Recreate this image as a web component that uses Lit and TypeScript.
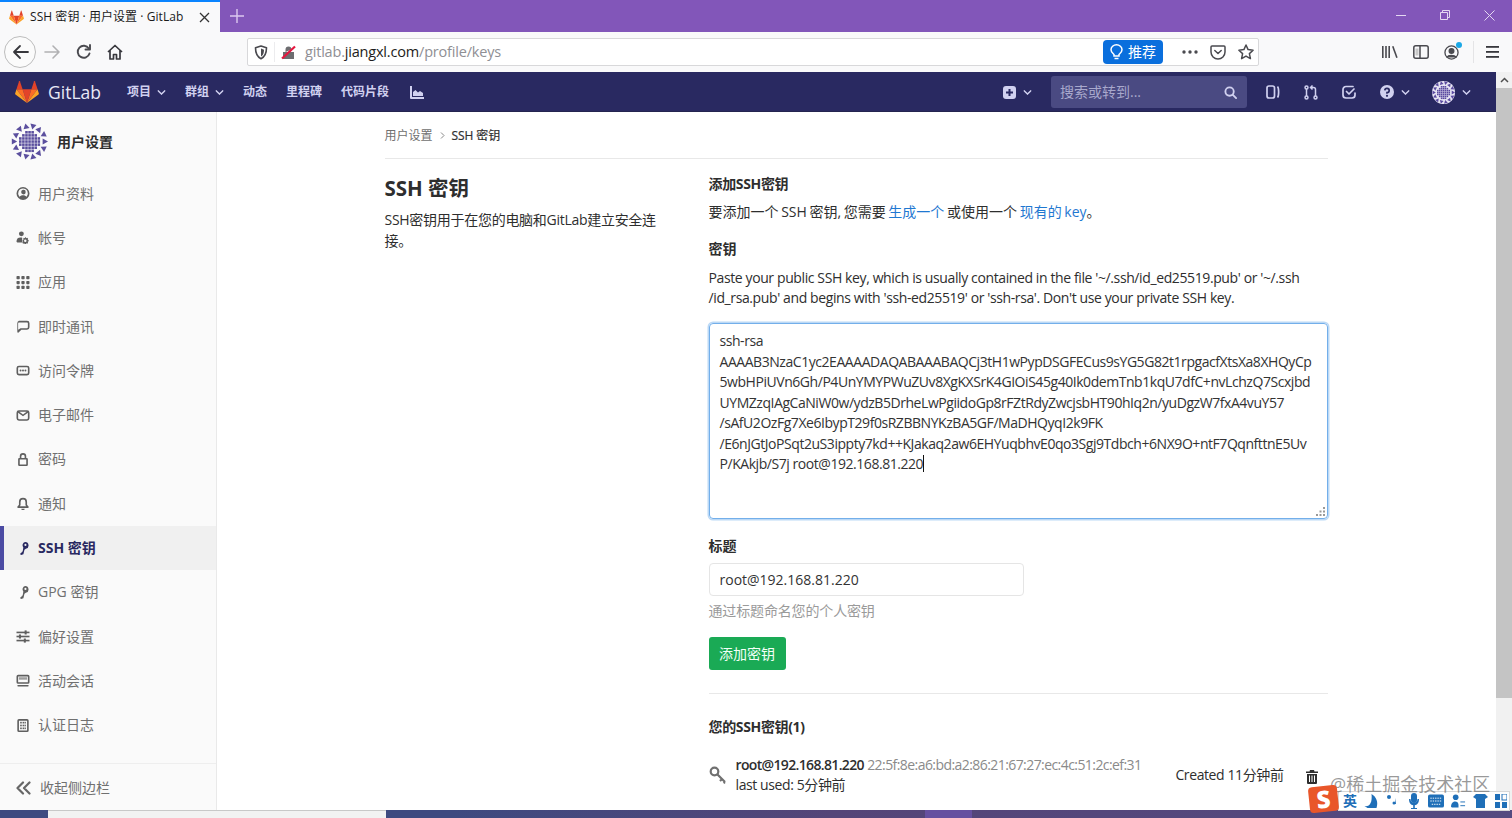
import { LitElement, css, html, svg } from 'lit';
import { customElement } from 'lit/decorators.js';

const tanuki = (size: number) => html`<svg width=${size} height=${size} viewBox="0 0 36 34">
  <path fill="#e24329" d="M18 33.5 24.6 13H11.4Z" />
  <path fill="#fc6d26" d="M18 33.5 11.4 13H2.2Z" />
  <path fill="#fca326" d="M2.2 13 .2 19.1c-.2.6 0 1.200.5 1.600L18 33.500Z" />
  <path fill="#e24329" d="M2.200 13h9.200L7.400.800c-.2-.6-1.100-.6-1.300 0Z" />
  <path fill="#fc6d26" d="M18 33.500 24.600 13h9.200Z" />
  <path fill="#fca326" d="M33.800 13l2 6.100c.2.600 0 1.200-.5 1.600L18 33.500Z" />
  <path fill="#e24329" d="M33.800 13h-9.200l4-12.200c.2-.6 1.100-.6 1.300 0Z" />
</svg>`;

const icon = (body: unknown, size = 14, cls = '') =>
  html`<svg class=${cls} width=${size} height=${size} viewBox="0 0 16 16" fill="currentColor">${body}</svg>`;

const chevron = html`<svg class="chev" width="9" height="9" viewBox="0 0 10 10" fill="none" stroke="currentColor" stroke-width="1.600" stroke-linecap="round" stroke-linejoin="round"><path d="M1.500 3.200 5 6.800l3.500-3.600" /></svg>`;

const sideIcons: Record<string, unknown> = {
  profile: svg`<path fill-rule="evenodd" d="M8 0a8 8 0 1 1 0 16A8 8 0 0 1 8 0Zm0 2a6 6 0 0 0-4.500 10c1-1.300 2.700-2 4.500-2s3.500.7 4.500 2A6 6 0 0 0 8 2Zm0 1.500A2.800 2.800 0 1 1 8 9a2.800 2.800 0 0 1 0-5.500Z"/>`,
  account: svg`<circle cx="6" cy="3.500" r="3"/><path d="M0 13c0-3 1.500-5 5-5 .8 0 1.500.1 2 .3V14H1a1 1 0 0 1-1-1Z"/><path fill-rule="evenodd" d="M11.500 7.500l.5 1.300 1.300-.4 1 1-.5 1.200 1.200.7v1.400l-1.200.6.5 1.300-1 1-1.300-.5-.5 1.200h-1.500l-.5-1.200-1.300.5-1-1 .5-1.300L7.500 12.700v-1.400l1.200-.7-.5-1.200 1-1 1.300.4.500-1.300ZM10.800 10.500a1.500 1.500 0 1 0 0 3 1.500 1.500 0 0 0 0-3Z"/>`,
  apps: svg`<rect x="0" y="0" width="4" height="4" rx="1"/><rect x="6" y="0" width="4" height="4" rx="1"/><rect x="12" y="0" width="4" height="4" rx="1"/><rect x="0" y="6" width="4" height="4" rx="1"/><rect x="6" y="6" width="4" height="4" rx="1"/><rect x="12" y="6" width="4" height="4" rx="1"/><rect x="0" y="12" width="4" height="4" rx="1"/><rect x="6" y="12" width="4" height="4" rx="1"/><rect x="12" y="12" width="4" height="4" rx="1"/>`,
  chat: svg`<path fill-rule="evenodd" d="M3 1h10a3 3 0 0 1 3 3v5a3 3 0 0 1-3 3H6l-3.500 3.500c-.6.500-1.500.1-1.500-.7V4a3 3 0 0 1 2-3Zm0 2a1 1 0 0 0-1 1v8l3-2h8a1 1 0 0 0 1-1V4a1 1 0 0 0-1-1Z"/>`,
  token: svg`<path fill-rule="evenodd" d="M3 2h10a3 3 0 0 1 3 3v6a3 3 0 0 1-3 3H3a3 3 0 0 1-3-3V5a3 3 0 0 1 3-3Zm0 2a1 1 0 0 0-1 1v6a1 1 0 0 0 1 1h10a1 1 0 0 0 1-1V5a1 1 0 0 0-1-1Z"/><circle cx="5" cy="8" r="1.200"/><circle cx="8" cy="8" r="1.200"/><circle cx="11" cy="8" r="1.200"/>`,
  mail: svg`<path fill-rule="evenodd" d="M3 1.500h10a3 3 0 0 1 3 3v7a3 3 0 0 1-3 3H3a3 3 0 0 1-3-3v-7a3 3 0 0 1 3-3Zm-1 3.200v6.800a1 1 0 0 0 1 1h10a1 1 0 0 0 1-1V4.700L8 9ZM3.500 3.500 8 6.800l4.500-3.300Z"/>`,
  lock: svg`<path fill-rule="evenodd" d="M8 0a4 4 0 0 1 4 4v2h.5A1.500 1.500 0 0 1 14 7.500v7a1.500 1.500 0 0 1-1.500 1.500h-9A1.500 1.500 0 0 1 2 14.500v-7A1.500 1.500 0 0 1 3.500 6H4V4a4 4 0 0 1 4-4Zm0 2a2 2 0 0 0-2 2v2h4V4a2 2 0 0 0-2-2ZM4 8v6h8V8Z"/>`,
  bell: svg`<path fill-rule="evenodd" d="M8 1a5 5 0 0 1 5 5v3.500l2 2.500c.3.500 0 1.500-1 1.500H2c-1 0-1.300-1-1-1.500l2-2.500V6a5 5 0 0 1 5-5Zm0 2a3 3 0 0 0-3 3v4l-1 1.500h8L11 10V6a3 3 0 0 0-3-3Z"/><path d="M6 14.500h4a2 2 0 0 1-4 0Z"/>`,
  key: svg`<path fill-rule="evenodd" d="M10.500 0a4.200 4.200 0 0 1 1 8.300L9.800 9.500 8.500 15l-2.800 1-1.200-.8.400-1.500 1.300-.4.200-1 1.200-.6.300-1.800.5-3.200A4.200 4.200 0 0 1 10.500 0Zm.5 2.300a1.300 1.300 0 1 0 0 2.600 1.300 1.300 0 0 0 0-2.600Z"/>`,
  prefs: svg`<rect x="0" y="2" width="16" height="2"/><rect x="0" y="7" width="16" height="2"/><rect x="0" y="12" width="16" height="2"/><rect x="10" y="0.500" width="2.500" height="5" fill="currentColor"/><rect x="3" y="5.500" width="2.500" height="5"/><rect x="9" y="10.500" width="2.500" height="5"/>`,
  session: svg`<path fill-rule="evenodd" d="M2 1h12a2 2 0 0 1 2 2v7a2 2 0 0 1-2 2H2a2 2 0 0 1-2-2V3a2 2 0 0 1 2-2Zm0 2v7h12V3Z"/><rect x="3" y="4" width="10" height="3" opacity=".6"/><rect x="1" y="13.500" width="14" height="2" rx="1"/>`,
  log: svg`<path fill-rule="evenodd" d="M3 0h10a2 2 0 0 1 2 2v12a2 2 0 0 1-2 2H3a2 2 0 0 1-2-2V2a2 2 0 0 1 2-2Zm0 2v12h10V2Z"/><rect x="4.500" y="3.500" width="2" height="2"/><rect x="7.500" y="3.500" width="2" height="2"/><rect x="10" y="3.500" width="1.500" height="2"/><rect x="4.500" y="7" width="2" height="2"/><rect x="7.500" y="7" width="2" height="2"/><rect x="10" y="7" width="1.500" height="2"/><rect x="4.500" y="10.500" width="2" height="2"/><rect x="7.500" y="10.500" width="2" height="2"/><rect x="10" y="10.500" width="1.500" height="2"/>`,
};

const sideItems = [
  ['profile', '用户资料'],
  ['account', '帐号'],
  ['apps', '应用'],
  ['chat', '即时通讯'],
  ['token', '访问令牌'],
  ['mail', '电子邮件'],
  ['lock', '密码'],
  ['bell', '通知'],
  ['key', 'SSH 密钥'],
  ['key', 'GPG 密钥'],
  ['prefs', '偏好设置'],
  ['session', '活动会话'],
  ['log', '认证日志'],
];

const keyLines = [
  'ssh-rsa',
  'AAAAB3NzaC1yc2EAAAADAQABAAABAQCj3tH1wPypDSGFECus9sYG5G82t1rpgacfXtsXa8XHQyCp',
  '5wbHPiUVn6Gh/P4UnYMYPWuZUv8XgKXSrK4GIOiS45g40Ik0demTnb1kqU7dfC+nvLchzQ7Scxjbd',
  'UYMZzqIAgCaNiW0w/ydzB5DrheLwPgiidoGp8rFZtRdyZwcjsbHT90hIq2n/yuDgzW7fxA4vuY57',
  '/sAfU2OzFg7Xe6IbypT29f0sRZBBNYKzBA5GF/MaDHQyqI2k9FK',
  '/E6nJGtJoPSqt2uS3ippty7kd++KJakaq2aw6EHYuqbhvE0qo3Sgj9Tdbch+6NX9O+ntF7QqnfttnE5Uv',
];

// identicon: dotted centre with a ring of small triangles
const avatar = (size: number, fg: string, bg: string) => {
  const dots = [];
  for (let y = -3; y <= 3; y++) {
    for (let x = -3; x <= 3; x++) {
      if (x * x + y * y <= 11) dots.push(svg`<rect x=${16.800 + x * 3} y=${16.800 + y * 3} width="2.500" height="2.500" />`);
    }
  }
  const tris = [];
  for (let i = 0; i < 14; i++) {
    const a = (i / 14) * Math.PI * 2;
    tris.push(svg`<path transform="translate(${18 + Math.cos(a) * 15} ${18 + Math.sin(a) * 15}) rotate(${(a * 180) / Math.PI + 90 + (i % 2) * 180})" d="M0-3 3 2.200H-3Z" />`);
  }
  return html`<svg width=${size} height=${size} viewBox="0 0 36 36"><circle cx="18" cy="18" r="18" fill=${bg} /><g fill=${fg}>${dots}${tris}</g></svg>`;
};

@customElement('app-root')
export class AppRoot extends LitElement {
  static styles = css`
    :host {
      display: flex;
      flex-direction: column;
      position: relative;
      width: 1512px;
      height: 818px;
      overflow: hidden;
      background: #fff;
      font: 14px/20px 'Open Sans', 'Noto Sans CJK SC', sans-serif;
      color: #2e2e2e;
    }
    .tabbar {
      display: flex;
      align-items: stretch;
      height: 32px;
      flex: none;
      background: #8256b9;
      color: #fff;
    }
    .tab {
      display: flex;
      align-items: center;
      width: 220px;
      box-sizing: border-box;
      padding: 0 10px 0 9px;
      background: #f9f9fa;
      border-top: 2px solid #0a84ff;
      color: #1a1a1a;
      font-size: 12px;
      gap: 6px;
    }
    .tab-title {
      flex: 1;
      white-space: nowrap;
      letter-spacing: 0.05px;
    }
    .tab-close,
    .newtab {
      display: flex;
    }
    .newtab {
      margin: 9px 0 0 10px;
      height: 16px;
      color: #dcc8f0;
    }
    .winbtns {
      display: flex;
      margin-left: auto;
      color: #e4d8f2;
      gap: 34px;
      padding: 10px 17px 0 0;
    }
    .toolbar {
      display: flex;
      align-items: center;
      height: 40px;
      flex: none;
      background: #f9f9fa;
      color: #4a4a4f;
    }
    .back {
      display: flex;
      align-items: center;
      justify-content: center;
      width: 32px;
      height: 32px;
      margin-left: 4px;
      border: 1px solid #bdbdbd;
      border-radius: 50%;
      box-sizing: border-box;
      background: #fbfbfb;
    }
    .tool {
      display: flex;
      flex: none;
    }
    .fwd {
      margin-left: 8px;
      color: #b1b1b3;
    }
    .reload {
      margin-left: 15px;
    }
    .home {
      margin-left: 15px;
    }
    .urlbar {
      display: flex;
      align-items: center;
      width: 1012px;
      height: 28px;
      margin-left: 124px;
      box-sizing: border-box;
      background: #fff;
      border: 1px solid #d8d8da;
      border-radius: 2px;
      padding-left: 6px;
    }
    .sep {
      width: 1px;
      height: 20px;
      margin: 0 6px;
      background: #ececee;
    }
    .url {
      margin-left: 9px;
      color: #8f8f94;
      font-size: 14.500px;
      letter-spacing: -0.19px;
    }
    .url b {
      font-weight: 400;
      color: #1d1d20;
    }
    .rec {
      display: flex;
      align-items: center;
      justify-content: center;
      gap: 5px;
      width: 60px;
      height: 24px;
      margin-left: auto;
      border-radius: 4px;
      background: #0a6fdd;
      color: #fff;
      font-size: 14px;
    }
    .urlicons {
      display: flex;
      align-items: center;
      gap: 12px;
      margin: 0 4px 0 19px;
    }
    .rightbtns {
      display: flex;
      align-items: center;
      gap: 15px;
      margin-left: 123px;
    }
    .badgewrap {
      position: relative;
      display: flex;
    }
    .badge {
      position: absolute;
      top: -3px;
      right: -3px;
      width: 6px;
      height: 6px;
      border-radius: 50%;
      background: #1ba8e6;
    }
    .tsep {
      width: 1px;
      height: 22px;
      background: #e4e4e6;
      margin: 0 -3px 0 -1px;
    }
    .main {
      display: flex;
      flex: 1;
      min-height: 0;
    }
    .appcol {
      display: flex;
      flex-direction: column;
      flex: 1;
      min-width: 0;
    }
    .scrollbar {
      display: flex;
      flex-direction: column;
      width: 16px;
      flex: none;
      background: #f1f1f1;
    }
    .sb-up {
      display: flex;
      justify-content: center;
      align-items: center;
      height: 16px;
      color: #505050;
    }
    .sb-thumb {
      height: 610px;
      background: #c4c4c4;
    }
    .nav {
      display: flex;
      align-items: center;
      height: 38px;
      flex: none;
      background: #292961;
      color: #d1d1f0;
      font-size: 12px;
      font-weight: 700;
      border-bottom: 1px solid #24244f;
      padding: 1px 0 0 15px;
    }
    .brand {
      display: flex;
      align-items: center;
      gap: 9px;
      width: 112px;
      color: #e8e8f6;
      font-size: 17.500px;
      font-weight: 400;
      flex: none;
    }
    .links {
      display: flex;
      align-items: center;
      gap: 19px;
    }
    .link {
      display: flex;
      align-items: center;
      gap: 6px;
      white-space: nowrap;
    }
    .link.chart {
      margin-left: 2px;
    }
    .chev {
      flex: none;
    }
    .navright {
      display: flex;
      align-items: center;
      margin-left: auto;
      padding-right: 25px;
      color: #d1d1f0;
    }
    .navgroup {
      display: flex;
      align-items: center;
      gap: 7px;
    }
    .search {
      display: flex;
      align-items: center;
      justify-content: space-between;
      width: 196px;
      height: 32px;
      box-sizing: border-box;
      margin: 0 19px 0 19px;
      padding: 0 10px 0 9px;
      border-radius: 3px;
      background: #4a4a82;
      color: #a8a8cc;
      font-size: 14px;
      font-weight: 400;
    }
    .navicons {
      display: flex;
      align-items: center;
      gap: 24px;
      margin-right: 22px;
    }
    .body {
      display: flex;
      flex: 1;
      min-height: 0;
    }
    .side {
      display: flex;
      flex-direction: column;
      width: 217px;
      flex: none;
      box-sizing: border-box;
      background: #fafafa;
      border-right: 1px solid #e9e9e9;
    }
    .side-head {
      display: flex;
      align-items: center;
      gap: 9px;
      height: 59.500px;
      padding: 0 0 0 11px;
      font-weight: 700;
      flex: none;
      box-sizing: border-box;
    }
    .item {
      display: flex;
      align-items: center;
      gap: 8px;
      height: 44.300px;
      padding-left: 16px;
      color: #707070;
      flex: none;
      box-sizing: border-box;
    }
    .item.active {
      background: #f0f0f0;
      color: #292961;
      font-weight: 700;
      border-left: 4px solid #4b4ba3;
      padding-left: 12px;
    }
    .item svg {
      color: #5f5f5f;
      flex: none;
      width: 14px;
    }
    .item.active svg {
      color: #292961;
    }
    .collapse {
      display: flex;
      align-items: center;
      gap: 9px;
      height: 47px;
      margin-top: auto;
      padding: 2px 0 0 16px;
      border-top: 1px solid #eee;
      color: #707070;
      box-sizing: border-box;
      flex: none;
    }
    .page {
      flex: 1;
      min-width: 0;
      overflow: hidden;
      padding-right: 1px;
    }
    .wrap {
      width: 943px;
      margin: 0 auto;
    }
    .crumbs {
      display: flex;
      align-items: center;
      gap: 7px;
      height: 47px;
      box-sizing: border-box;
      border-bottom: 1px solid #e8e8e8;
      font-size: 12px;
      color: #707070;
      padding-top: 1px;
    }
    .crumbs b {
      font-weight: 400;
      color: #303030;
      letter-spacing: -0.1px;
      -webkit-text-stroke: 0.2px #303030;
    }
    .cols {
      display: grid;
      grid-template-columns: 324px 619px;
    }
    .intro {
      padding: 15px 40px 0 0;
    }
    .intro h4 {
      margin: 0;
      font-size: 20.500px;
      line-height: 28px;
      font-weight: 700;
      color: #2e2e2e;
    }
    .intro p {
      margin: 7px 0 0;
      line-height: 21px;
      color: #2e2e2e;
      letter-spacing: -0.28px;
    }
    .form {
      padding-top: 15px;
    }
    h5 {
      margin: 0;
      font-size: 14px;
      line-height: 20px;
      font-weight: 700;
      color: #2e2e2e;
    }
    .tight {
      letter-spacing: -0.35px;
    }
    .form p {
      margin: 8px 0 0;
      word-spacing: -1px;
    }
    a {
      color: #1f78d1;
      text-decoration: none;
    }
    .mt17 {
      margin-top: 17px;
    }
    .form p.hintp {
      margin-top: 9px;
      letter-spacing: -0.39px;
      word-spacing: 0;
    }
    .key {
      position: relative;
      height: 196px;
      margin-top: 15px;
      box-sizing: border-box;
      padding: 7px 10px;
      border: 1px solid #73afea;
      border-radius: 4px;
      box-shadow: 0 0 0 1.500px #bcd9f6;
      line-height: 20.500px;
      color: #333;
      white-space: pre;
      letter-spacing: -0.45px;
      overflow: hidden;
    }
    .caret {
      display: inline-block;
      width: 1px;
      height: 17px;
      background: #111;
      vertical-align: -3px;
    }
    .grip {
      position: absolute;
      right: 2px;
      bottom: 2px;
      color: #999;
      display: flex;
    }
    .input {
      width: 315px;
      height: 33px;
      margin-top: 7px;
      box-sizing: border-box;
      padding: 0 10px;
      border: 1px solid #e5e5e5;
      border-radius: 4px;
      line-height: 32px;
      color: #333;
    }
    .help {
      margin-top: 5px;
      color: #9a9a9a;
      letter-spacing: -0.15px;
    }
    .btn {
      display: flex;
      align-items: center;
      justify-content: center;
      width: 77px;
      height: 33px;
      margin-top: 16px;
      border-radius: 3px;
      background: #1aaa55;
      color: #f2fff7;
    }
    .hr {
      height: 1px;
      margin-top: 23px;
      background: #e8e8e8;
    }
    .mt23 {
      margin-top: 23px;
    }
    .keyrow {
      display: flex;
      align-items: center;
      margin-top: 18px;
    }
    .keyicon {
      width: 27px;
      flex: none;
      display: flex;
      color: #707070;
    }
    .keyinfo {
      flex: 1;
      min-width: 0;
      white-space: nowrap;
      letter-spacing: -0.4px;
    }
    .keyinfo strong {
      font-weight: 600;
      letter-spacing: -0.65px;
    }
    .fp {
      color: #8a8a8a;
      letter-spacing: -0.57px;
    }
    .created {
      margin-right: 22px;
      white-space: nowrap;
      letter-spacing: -0.4px;
    }
    .trash {
      display: flex;
      margin: 3px 10px 0 0;
      color: #2e2e2e;
    }
    .taskbar {
      display: flex;
      height: 8px;
      flex: none;
      background: linear-gradient(90deg, #3e4a80 0, #3e4a80 30%, #544578 55%, #544a80 100%);
    }
    .ts-search {
      width: 338px;
      margin-left: 48px;
      box-sizing: border-box;
      background: #f2f2f2;
      border-top: 1px solid #c8c8c8;
    }
    .ts-app {
      width: 47px;
      margin-left: 539px;
      background: #6650a0;
    }
    .watermark {
      position: absolute;
      left: 1330px;
      top: 775px;
      font-size: 18px;
      line-height: 18px;
      color: rgba(120, 120, 120, 0.75);
      white-space: nowrap;
    }
    .ime {
      position: absolute;
      left: 1338px;
      top: 791px;
      display: flex;
      align-items: center;
      gap: 7px;
      width: 172px;
      height: 20px;
      box-sizing: border-box;
      padding-left: 4px;
      background: rgba(255, 255, 255, 0.82);
      border: 1px solid #d8d8d8;
      color: #1f6fb8;
      font-size: 14px;
      line-height: 14px;
      font-weight: 700;
    }
    .ime svg {
      flex: none;
    }
    .ime-logo {
      position: absolute;
      left: 1309px;
      top: 786px;
      display: flex;
      align-items: center;
      justify-content: center;
      width: 29px;
      height: 26px;
      border-radius: 4px;
      background: #e9562a;
      color: #fff;
      font-size: 24px;
      font-weight: 800;
      transform: rotate(-6deg);
    }
  `;

  render() {
    return html`
      <div class="tabbar">
        <div class="tab">
          ${tanuki(15)}
          <span class="tab-title">SSH 密钥 · 用户设置 · GitLab</span>
          <span class="tab-close">
            <svg width="11" height="11" viewBox="0 0 11 11" fill="none" stroke="#333" stroke-width="1.300"><path d="M1 1l9 9M10 1l-9 9" /></svg>
          </span>
        </div>
        <span class="newtab">
          <svg width="14" height="14" viewBox="0 0 14 14" fill="none" stroke="currentColor" stroke-width="1.400"><path d="M7 0v14M0 7h14" /></svg>
        </span>
        <div class="winbtns">
          <svg width="10" height="10" viewBox="0 0 10 10" stroke="currentColor" fill="none"><path d="M0 5.500h10" /></svg>
          <svg width="10" height="10" viewBox="0 0 10 10" stroke="currentColor" fill="none"><path d="M.5 2.500h7v7h-7zM2.500 2.500v-2h7v7h-2" /></svg>
          <svg width="11" height="11" viewBox="0 0 11 11" stroke="currentColor" fill="none"><path d="M.5.500l10 10M10.500.500l-10 10" /></svg>
        </div>
      </div>

      <div class="toolbar">
        <span class="back">
          <svg width="17" height="16" viewBox="0 0 17 16" fill="none" stroke="#38383d" stroke-width="1.800" stroke-linecap="round" stroke-linejoin="round"><path d="M16 8H2M8 2 2 8l6 6" /></svg>
        </span>
        <span class="tool fwd">
          <svg width="17" height="16" viewBox="0 0 17 16" fill="none" stroke="currentColor" stroke-width="1.600" stroke-linecap="round" stroke-linejoin="round"><path d="M1 8h14M9 2l6 6-6 6" /></svg>
        </span>
        <span class="tool reload">
          <svg width="16" height="16" viewBox="0 0 16 16" fill="none" stroke="#4a4a4f" stroke-width="1.900" stroke-linecap="round" stroke-linejoin="round"><path d="M13.500 9.500A6 6 0 1 1 12.800 4.500" /><path d="M14 1v4.500H9.500" /></svg>
        </span>
        <span class="tool home">
          <svg width="16" height="16" viewBox="0 0 16 16" fill="none" stroke="#38383d" stroke-width="1.700" stroke-linejoin="round"><path d="M1 8 8 1.500 15 8M3 6.500V15h3.500v-4.500h3V15H13V6.500" /></svg>
        </span>
        <div class="urlbar">
          <svg width="14" height="15" viewBox="0 0 14 15" fill="none" stroke="#4a4a4f" stroke-width="1.600" stroke-linejoin="round"><path d="M7 1 1.500 2.800c0 5.500 1.500 9 5.500 11 4-2 5.500-5.500 5.500-11Z" /><path d="M7 3.500v8c2-1.200 3-3.500 3-6.800Z" fill="#4a4a4f" stroke="none" /></svg>
          <span class="sep"></span>
          <svg width="15" height="15" viewBox="0 0 15 15"><path fill="#6d6d70" d="M2 7h11v7H2zM4.500 7V4.500a3 3 0 0 1 6 0" /><path d="M1 13.500 14 1.500" stroke="#e5173f" stroke-width="2.200" /></svg>
          <span class="url">gitlab.<b>jiangxl.com</b>/profile/keys</span>
          <span class="rec">
            <svg width="13" height="16" viewBox="0 0 13 16" fill="none" stroke="#fff" stroke-width="1.500"><path d="M4 10.500C2.500 9 1 8 1 5.800a5.500 5 0 0 1 11 0C12 8 10.500 9 9 10.500v1.500H4Z" /><path d="M4.500 14.500h4" /></svg>
            推荐
          </span>
          <span class="urlicons">
            <svg width="16" height="4" viewBox="0 0 16 4" fill="#4a4a4f"><circle cx="2" cy="2" r="1.700" /><circle cx="8" cy="2" r="1.700" /><circle cx="14" cy="2" r="1.700" /></svg>
            <svg width="16" height="15" viewBox="0 0 16 15" fill="none" stroke="#4a4a4f" stroke-width="1.500" stroke-linejoin="round"><path d="M2 1h12a1 1 0 0 1 1 1v5a7 7 0 0 1-14 0V2a1 1 0 0 1 1-1Z" /><path d="M4.800 5.500 8 8.500l3.200-3" stroke-linecap="round" /></svg>
            <svg width="16" height="16" viewBox="0 0 16 16" fill="none" stroke="#4a4a4f" stroke-width="1.500" stroke-linejoin="round"><path d="M8 1l2.100 4.600 5 .6-3.700 3.400 1 5L8 12.100l-4.400 2.500 1-5L.9 6.200l5-.6Z" /></svg>
          </span>
        </div>
        <div class="rightbtns">
          <svg width="16" height="14" viewBox="0 0 16 14" fill="#4a4a4f"><rect x="0" y="1" width="1.600" height="12" /><rect x="3.200" y="1" width="1.600" height="12" /><rect x="6.400" y="1" width="1.600" height="12" /><path d="M10 1.400 11.500.9l4.200 11.700-1.500.5Z" /></svg>
          <svg width="16" height="14" viewBox="0 0 16 14" fill="none" stroke="#4a4a4f" stroke-width="1.500"><rect x=".8" y=".8" width="14.400" height="12.400" rx="2" /><path d="M7 1v12" /><path d="M2.500 3.500h3v7h-3z" fill="#c8c8c8" stroke="none" /></svg>
          <span class="badgewrap">
            <svg width="15" height="15" viewBox="0 0 16 16" fill="none" stroke="#4a4a4f" stroke-width="1.400"><circle cx="8" cy="8" r="7" /><circle cx="8" cy="6.300" r="2.500" fill="#4a4a4f" /><path d="M3.500 12.500c1-2 7.500-2 9 0Z" fill="#4a4a4f" /></svg>
            <span class="badge"></span>
          </span>
          <span class="tsep"></span>
          <svg width="13" height="12" viewBox="0 0 13 12" fill="#38383d"><rect y="0" width="13" height="1.800" /><rect y="5" width="13" height="1.800" /><rect y="10" width="13" height="1.800" /></svg>
        </div>
      </div>

      <div class="main">
        <div class="appcol">
          <div class="nav">
            <div class="brand">${tanuki(24)}GitLab</div>
            <div class="links">
              <span class="link">项目${chevron}</span>
              <span class="link">群组${chevron}</span>
              <span class="link">动态</span>
              <span class="link">里程碑</span>
              <span class="link">代码片段</span>
              <span class="link chart">
                <svg width="14" height="13" viewBox="0 0 14 13" fill="currentColor"><path d="M0 0h2v11h12v2H1a1 1 0 0 1-1-1Z" /><path d="M3 10V6l2.500-2L8 6.500 10 5l3 2v3Z" /></svg>
              </span>
            </div>
            <div class="navright">
              <span class="navgroup">
                <svg width="13" height="13" viewBox="0 0 13 13"><rect width="13" height="13" rx="3" fill="currentColor" /><path d="M6.500 3v7M3 6.500h7" stroke="#292961" stroke-width="2" /></svg>
                ${chevron}
              </span>
              <div class="search">
                <span>搜索或转到...</span>
                <svg width="13" height="13" viewBox="0 0 14 14" fill="none" stroke="#d1d1f0" stroke-width="2"><circle cx="6" cy="6" r="4.500" /><path d="M9.500 9.500 13 13" stroke-linecap="round" /></svg>
              </div>
              <div class="navicons">
                <svg width="14" height="14" viewBox="0 0 14 14" fill="none" stroke="currentColor" stroke-width="1.700"><rect x="1" y="1" width="7.500" height="12" rx="2" /><path d="M11.500 1.500c1.500 1.500 1.500 9.500 0 11" /></svg>
                <svg width="14" height="15" viewBox="0 0 14 15" fill="none" stroke="currentColor" stroke-width="1.500"><circle cx="2.500" cy="2.500" r="1.500" /><circle cx="2.500" cy="12.500" r="1.500" /><circle cx="11.500" cy="12.500" r="1.500" /><path d="M2.500 4v7M11.500 11V4.500a2 2 0 0 0-2-2H7M8.500 .5l-2 2 2 2" /></svg>
                <svg width="14" height="14" viewBox="0 0 14 14" fill="none" stroke="currentColor" stroke-width="1.700" stroke-linecap="round" stroke-linejoin="round"><path d="M11 1.500H4a3 3 0 0 0-3 3V10a3 3 0 0 0 3 3h6a3 3 0 0 0 3-3V8" /><path d="M4.500 6.500 7 9l5-5" /></svg>
                <span class="navgroup">
                  <svg width="14" height="14" viewBox="0 0 14 14"><circle cx="7" cy="7" r="7" fill="currentColor" /><path d="M4.800 5.300A2.200 2.200 0 1 1 7 7.700v1" fill="none" stroke="#292961" stroke-width="1.700" /><circle cx="7" cy="10.800" r="1.100" fill="#292961" /></svg>
                  ${chevron}
                </span>
              </div>
              <span class="navgroup">
                ${avatar(23, '#5a4aa0', '#e8e6f4')}
                ${chevron}
              </span>
            </div>
          </div>

          <div class="body">
            <aside class="side">
              <div class="side-head">${avatar(37, '#5b4f9e', '#fafafa')}<span>用户设置</span></div>
              ${sideItems.map(
                ([ic, label], i) => html`
                  <div class="item ${i === 8 ? 'active' : ''}">${icon(sideIcons[ic], 13)}<span>${label}</span></div>
                `,
              )}
              <div class="collapse">
                <svg width="15" height="14" viewBox="0 0 15 14" fill="none" stroke="#666" stroke-width="2.200" stroke-linecap="round" stroke-linejoin="round"><path d="M7 1.500 1.500 7 7 12.500M13.500 1.500 8 7l5.500 5.500" /></svg>
                <span>收起侧边栏</span>
              </div>
            </aside>

            <div class="page">
              <div class="wrap">
                <div class="crumbs">
                  <span>用户设置</span>
                  <svg width="5" height="7" viewBox="0 0 5 7" fill="none" stroke="#888"><path d="M1 .5l3 3-3 3" /></svg>
                  <b>SSH 密钥</b>
                </div>
                <div class="cols">
                  <div class="intro">
                    <h4>SSH 密钥</h4>
                    <p>SSH密钥用于在您的电脑和GitLab建立安全连接。</p>
                  </div>
                  <div class="form">
                    <h5 class="tight">添加SSH密钥</h5>
                    <p>要添加一个 SSH 密钥, 您需要 <a>生成一个</a> 或使用一个 <a>现有的 key</a>。</p>
                    <h5 class="mt17">密钥</h5>
                    <p class="hintp">Paste your public SSH key, which is usually contained in the file '~/.ssh/id_ed25519.pub' or '~/.ssh<br />/id_rsa.pub' and begins with 'ssh-ed25519' or 'ssh-rsa'. Don't use your private SSH key.</p>
                    <div class="key">${keyLines.map((l) => html`<div>${l}</div>`)}<div>P/KAkjb/S7j root@192.168.81.220<span class="caret"></span></div><span class="grip"><svg width="9" height="9" viewBox="0 0 9 9" fill="currentColor"><rect x="7" y="0" width="2" height="2" /><rect x="3.500" y="3.500" width="2" height="2" /><rect x="7" y="3.500" width="2" height="2" /><rect x="0" y="7" width="2" height="2" /><rect x="3.500" y="7" width="2" height="2" /><rect x="7" y="7" width="2" height="2" /></svg></span></div>
                    <h5 class="mt17">标题</h5>
                    <div class="input">root@192.168.81.220</div>
                    <div class="help">通过标题命名您的个人密钥</div>
                    <div class="btn">添加密钥</div>
                    <div class="hr"></div>
                    <h5 class="mt23 tight">您的SSH密钥(1)</h5>
                    <div class="keyrow">
                      <span class="keyicon">
                        <svg width="18" height="18" viewBox="0 0 18 18" fill="none" stroke="currentColor" stroke-width="2.200"><circle cx="5.500" cy="5.500" r="3.800" /><path d="M8.500 8.500 16 16M13 13l-2 2M16 16l-1.500 1" /></svg>
                      </span>
                      <div class="keyinfo">
                        <div><strong>root@192.168.81.220</strong> <span class="fp">22:5f:8e:a6:bd:a2:86:21:67:27:ec:4c:51:2c:ef:31</span></div>
                        <div>last used: 5分钟前</div>
                      </div>
                      <span class="created">Created 11分钟前</span>
                      <span class="trash">
                        <svg width="12" height="14" viewBox="0 0 12 14" fill="currentColor"><path d="M4 0h4l.5 1.500H12V3H0V1.500h3.500Z" /><path fill-rule="evenodd" d="M1 4h10v9a1 1 0 0 1-1 1H2a1 1 0 0 1-1-1Zm2 1.500V12h1V5.500Zm2.500 0V12h1V5.500Zm2.500 0V12h1V5.500Z" /></svg>
                      </span>
                    </div>
                  </div>
                </div>
              </div>
            </div>
          </div>
        </div>
        <div class="scrollbar">
          <span class="sb-up">
            <svg width="9" height="6" viewBox="0 0 9 6" fill="none" stroke="currentColor" stroke-width="1.500"><path d="M1 5l3.500-3.500L8 5" /></svg>
          </span>
          <div class="sb-thumb"></div>
        </div>
      </div>

      <div class="taskbar">
        <div class="ts-search"></div>
        <div class="ts-app"></div>
      </div>

      <div class="ime">
        <span>英</span>
        <svg width="15" height="14" viewBox="0 0 14 14" fill="currentColor"><path d="M0 12c5 1 8-3 7-12 5 3 7 8 5 14H3Z" /></svg>
        <svg width="14" height="14" viewBox="0 0 14 14" fill="currentColor"><circle cx="3" cy="3" r="2" /><circle cx="8" cy="9" r="1.500" /><path d="M9 4l1 6h-1Z" /></svg>
        <svg width="14" height="16" viewBox="0 0 14 16" fill="currentColor"><rect x="4" y="0" width="6" height="10" rx="3" /><path d="M2 6h1.500c0 5 7 5 7 0H12c0 4-2 6-4.200 6.300V15H10v1H4v-1h2.200v-2.700C4 12 2 10 2 6Z" /></svg>
        <svg width="16" height="14" viewBox="0 0 17 14"><rect width="17" height="14" rx="2" fill="currentColor" /><path d="M2.500 4h12M2.500 7h12M4 10.500h9" stroke="#fff" stroke-dasharray="1.500 1" /></svg>
        <svg width="15" height="14" viewBox="0 0 16 14" fill="currentColor"><circle cx="5" cy="3" r="3" /><path d="M0 13c0-7 8-7 8-2v3H1Z" /><path d="M10 8h5M10 12h5" stroke="currentColor" /></svg>
        <svg width="15" height="14" viewBox="0 0 15 14" fill="currentColor"><path d="M0 3l3-3h9l3 3-3 2v9H3V5Z" /></svg>
        <svg width="12" height="14" viewBox="0 0 12 14" fill="currentColor"><rect width="5" height="6" /><rect x="7" width="5" height="6" fill="none" stroke="currentColor" /><rect y="8" width="5" height="6" /><rect x="7" y="8" width="5" height="6" /></svg>
      </div>
      <div class="watermark">@稀土掘金技术社区</div>
      <div class="ime-logo">S</div>
    `;
  }
}
